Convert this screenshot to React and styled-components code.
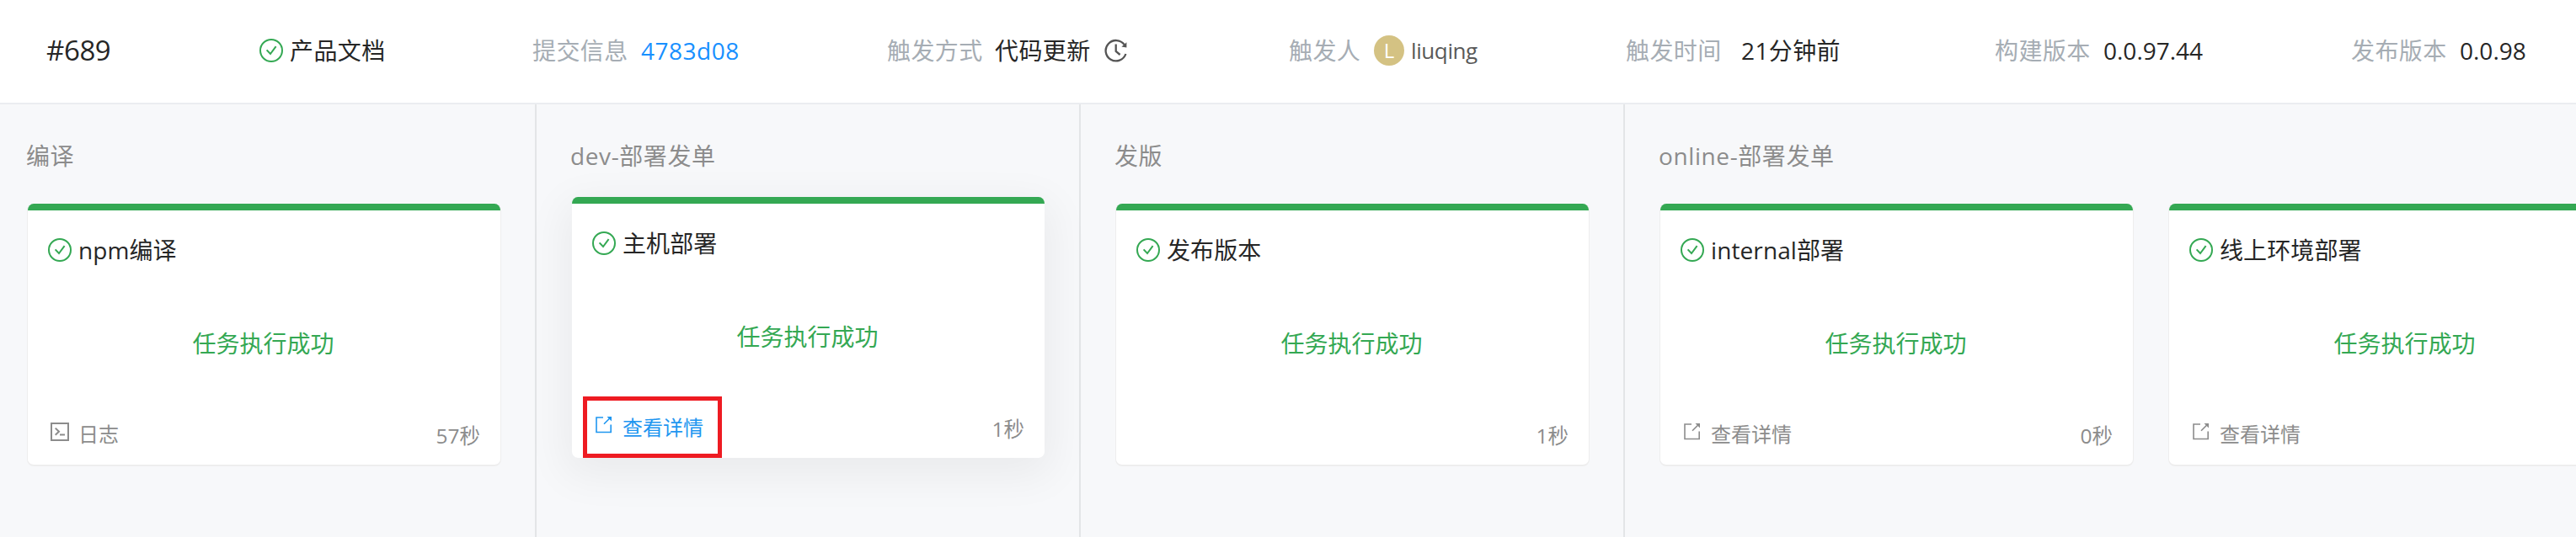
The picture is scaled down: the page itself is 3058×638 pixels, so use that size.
import React from "react";
import styled, { createGlobalStyle } from "styled-components";

const Global = createGlobalStyle`
  *, *::before, *::after { box-sizing: border-box; }
  body {
    margin: 0;
    overflow: hidden;
    background: #f7f8fa;
    font-family: "Open Sans", "Noto Sans CJK SC", sans-serif;
    font-weight: 400;
    color: #262626;
  }
`;

const Page = styled.div`
  display: flex;
  flex-direction: column;
  width: 3058px;
  height: 638px;
  overflow: hidden;
`;

const Header = styled.header`
  display: flex;
  align-items: center;
  flex: none;
  height: 124px;
  padding-left: 55px;
  padding-bottom: 2px;
  background: #fff;
  border-bottom: 2px solid #ebedf0;
`;

const Item = styled.div`
  display: flex;
  align-items: center;
  flex: none;
  width: ${(p) => p.$w}px;
  font-size: 28px;
  line-height: 40px;
  white-space: nowrap;
`;

const BuildNumber = styled.span`
  font-size: 33px;
  letter-spacing: -0.4px;
`;

const Label = styled.span`
  width: ${(p) => p.$w}px;
  color: #a6adb4;
  letter-spacing: 0.4px;
`;

const Value = styled.span`
  color: ${(p) => p.$color || "#262626"};
  letter-spacing: ${(p) => p.$ls ?? 0.4}px;
`;

const Avatar = styled.span`
  display: flex;
  align-items: center;
  justify-content: center;
  width: 36px;
  height: 36px;
  margin-right: 8px;
  border-radius: 50%;
  background: #d4c283;
  color: #fff;
  font-size: 24px;
`;

const User = styled.span`
  color: #595959;
  font-size: 26px;
  letter-spacing: -0.4px;
`;

const Stages = styled.main`
  display: flex;
  flex: 1;
`;

const Stage = styled.section`
  flex: none;
  width: ${(p) => p.$w}px;
  padding: 41px 0 0 ${(p) => p.$pl}px;
  border-right: 2px solid #e3e5e7;
`;

const StageTitle = styled.h2`
  margin: 0 0 37px;
  color: #8c8c8c;
  font-size: 28px;
  font-weight: 400;
  line-height: 40px;
  letter-spacing: 0.6px;
  white-space: nowrap;
`;

const Cards = styled.div`
  display: flex;
  gap: 41px;
  padding-left: 1px;
`;

const Card = styled.article`
  display: flex;
  flex-direction: column;
  flex: none;
  width: 563px;
  height: ${(p) => (p.$raised ? 310 : 312)}px;
  margin-top: ${(p) => (p.$raised ? -8 : 0)}px;
  border: 1px solid ${(p) => (p.$raised ? "transparent" : "#eeeeee")};
  border-width: 0 1px ${(p) => (p.$raised ? 0 : 2)}px;
  border-radius: 8px;
  overflow: hidden;
  background: #fff;
  background-clip: padding-box;
  box-shadow: ${(p) => (p.$raised ? "0 14px 50px 8px rgba(0, 0, 0, 0.055)" : "none")};
`;

const Bar = styled.div`
  flex: none;
  height: 8px;
  margin: 0 -1px;
  background: #34a853;
`;

const CardTitle = styled.div`
  display: flex;
  align-items: center;
  height: 40px;
  margin: 27px 0 0 24px;
  font-size: 28px;
  white-space: nowrap;
`;

const TaskName = styled.span`
  margin-top: -2px;
  letter-spacing: 0.1px;
`;

const Result = styled.div`
  height: 40px;
  margin-top: 71px;
  padding-right: 2px;
  color: #34a853;
  font-size: 28px;
  line-height: 40px;
  text-align: center;
`;

const Footer = styled.div`
  display: flex;
  align-items: flex-start;
  justify-content: space-between;
  height: 73px;
  margin-top: auto;
  padding: 0 24px 0 13px;
`;

const Action = styled.span`
  display: flex;
  align-items: center;
  height: 73px;
  padding: 0 17px 0 8px;
  border: 5px solid ${(p) => (p.$marked ? "#ee1b22" : "transparent")};
  color: ${(p) => (p.$marked ? "#1e96f0" : "#8c8c8c")};
  font-size: 24px;
  white-space: nowrap;
`;

const ActionIcon = styled.span`
  display: flex;
  width: 34px;
  margin-top: -5px;
`;

const ActionText = styled.span`
  margin-top: -2px;
`;

const Duration = styled.span`
  margin: 21px 0 0 auto;
  color: #8c8c8c;
  font-size: 24.5px;
  line-height: 36px;
`;

const StatusIcon = styled.svg`
  flex: none;
  margin-right: 8px;
`;

const TriggerIcon = styled.svg`
  flex: none;
  margin-left: 16px;
`;

const Check = () => (
  <StatusIcon width="28" height="28" viewBox="0 0 28 28" fill="none" stroke="#34a853" strokeWidth="2">
    <circle cx="14" cy="14" r="13" />
    <path d="M8.6 13.4 L13 18 L19.6 9.2" />
  </StatusIcon>
);

const History = () => (
  <TriggerIcon width="28" height="28" viewBox="0 0 28 28" fill="none" stroke="#555" strokeWidth="2.3">
    <path d="M23.8 7.2 A12.2 12.2 0 1 0 25.4 18" />
    <path d="M13.7 6.5 V15 L18.6 19" />
    <path d="M26.4 4.2 V10.4 L20.4 9.4 Z" fill="#555" stroke="none" />
  </TriggerIcon>
);

const Log = () => (
  <svg width="24" height="24" viewBox="0 0 24 24" fill="none" stroke="currentColor" strokeWidth="2">
    <rect x="2" y="2" width="20" height="20" />
    <path d="M6.7 7.6 L11 11.7 L6.7 15.8 M12 15.5 H18" />
  </svg>
);

const Open = () => (
  <svg width="24" height="24" viewBox="0 0 24 24" fill="none" stroke="currentColor" strokeWidth="1.6">
    <path d="M11 3 H3 V20.5 H20.2 V11.5" />
    <path d="M12 10.8 L19.5 3.3" />
    <path d="M15.5 2 H21 V7.5 Z" fill="currentColor" stroke="none" />
  </svg>
);

const Task = ({ name, action, time, raised }) => (
  <Card $raised={raised}>
    <Bar />
    <CardTitle>
      <Check />
      <TaskName>{name}</TaskName>
    </CardTitle>
    <Result>任务执行成功</Result>
    <Footer>
      {action && (
        <Action $marked={raised}>
          <ActionIcon>{action === "日志" ? <Log /> : <Open />}</ActionIcon>
          <ActionText>{action}</ActionText>
        </Action>
      )}
      {time && <Duration>{time}</Duration>}
    </Footer>
  </Card>
);

export default function App() {
  return (
    <Page>
      <Global />
      <Header>
        <Item $w={253}><BuildNumber>#689</BuildNumber></Item>
        <Item $w={324}><Check /><Value>产品文档</Value></Item>
        <Item $w={421}><Label $w={129}>提交信息</Label><Value $color="#1890ff" $ls={0.5}>4783d08</Value></Item>
        <Item $w={477}><Label $w={128}>触发方式</Label><Value>代码更新</Value><History /></Item>
        <Item $w={400}><Label $w={101}>触发人</Label><Avatar>L</Avatar><User>liuqing</User></Item>
        <Item $w={438}><Label $w={137}>触发时间</Label><Value>21分钟前</Value></Item>
        <Item $w={423}><Label $w={129}>构建版本</Label><Value $ls={0}>0.0.97.44</Value></Item>
        <Item $w={260}><Label $w={129}>发布版本</Label><Value $ls={0}>0.0.98</Value></Item>
      </Header>
      <Stages>
        <Stage $w={637} $pl={31}>
          <StageTitle>编译</StageTitle>
          <Cards><Task name="npm编译" action="日志" time="57秒" /></Cards>
        </Stage>
        <Stage $w={646} $pl={40}>
          <StageTitle>dev-部署发单</StageTitle>
          <Cards><Task name="主机部署" action="查看详情" time="1秒" raised /></Cards>
        </Stage>
        <Stage $w={646} $pl={40}>
          <StageTitle>发版</StageTitle>
          <Cards><Task name="发布版本" time="1秒" /></Cards>
        </Stage>
        <Stage $w={1250} $pl={40}>
          <StageTitle>online-部署发单</StageTitle>
          <Cards>
            <Task name="internal部署" action="查看详情" time="0秒" />
            <Task name="线上环境部署" action="查看详情" />
          </Cards>
        </Stage>
      </Stages>
    </Page>
  );
}
